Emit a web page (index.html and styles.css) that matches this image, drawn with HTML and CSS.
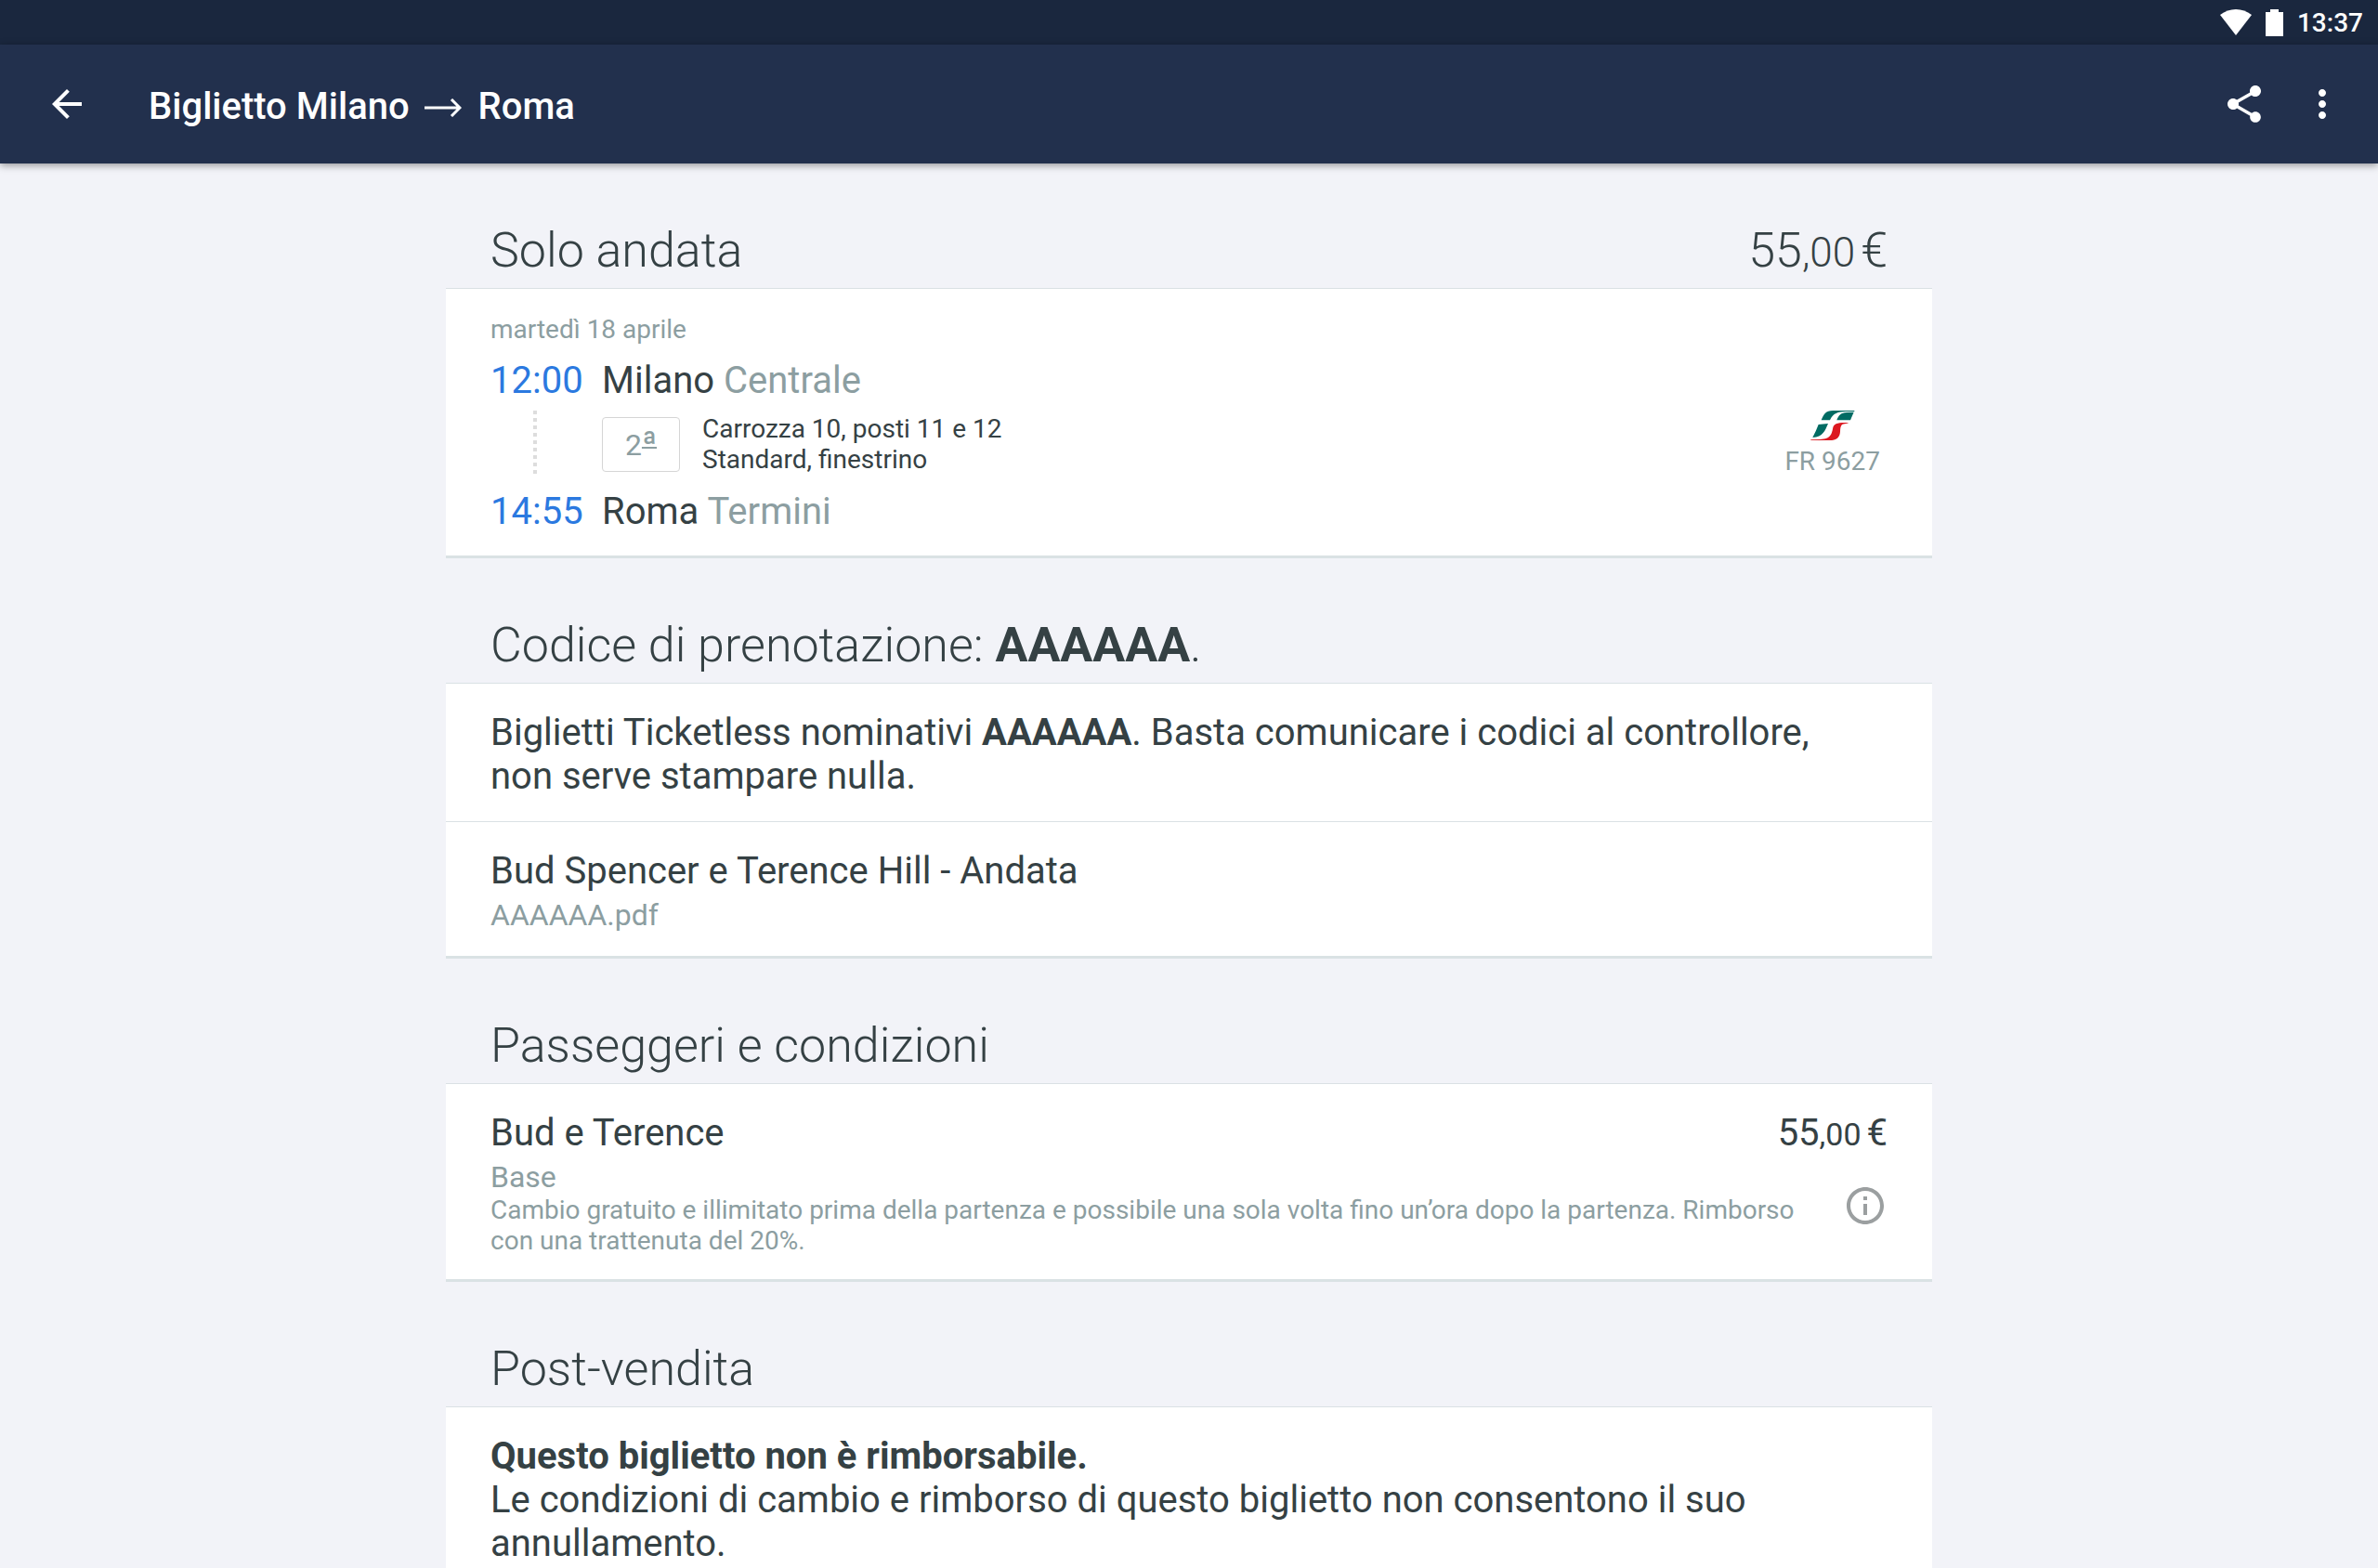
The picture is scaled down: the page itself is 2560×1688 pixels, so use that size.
FILE: index.html
```
<!DOCTYPE html>
<html lang="it">
<head>
  <meta charset="utf-8">
  <title>Biglietto Milano → Roma</title>
  <link rel="stylesheet" href="styles.css">
</head>
<body>
  <div class="status-bar">
    <svg class="wifi" viewBox="0 0 34 28"><path d="M0 6C10-2 24-2 34 6L17 28Z"/></svg>
    <svg class="battery" viewBox="0 0 19 29"><path d="M5 0H14V3H19V29H0V3H5Z"/></svg>
    <span>13:37</span>
  </div>

  <header class="app-bar">
    <button class="icon-button" aria-label="Indietro">
      <svg viewBox="0 0 24 24"><path d="M20 11H7.83l5.59-5.59L12 4l-8 8 8 8 1.41-1.41L7.83 13H20v-2z"/></svg>
    </button>
    <h1>Biglietto Milano <svg class="arrow" role="img" aria-label="→" viewBox="0 0 40 20"><path d="M0 10H38M29 1L38 10L29 19"/></svg> Roma</h1>
    <button class="icon-button" aria-label="Condividi">
      <svg viewBox="0 0 24 24"><path d="M18 16.08c-.76 0-1.44.3-1.96.77L8.91 12.7c.05-.23.09-.46.09-.7s-.04-.47-.09-.7l7.05-4.11c.54.5 1.25.81 2.04.81 1.66 0 3-1.34 3-3s-1.34-3-3-3-3 1.34-3 3c0 .24.04.47.09.7L8.04 9.81C7.5 9.31 6.79 9 6 9c-1.66 0-3 1.34-3 3s1.34 3 3 3c.79 0 1.5-.31 2.04-.81l7.12 4.16c-.05.21-.08.43-.08.65 0 1.61 1.31 2.92 2.92 2.92s2.92-1.31 2.92-2.92-1.31-2.92-2.92-2.92z"/></svg>
    </button>
    <button class="icon-button" aria-label="Altro">
      <svg viewBox="0 0 24 24"><path d="M12 8c1.100 0 2-.9 2-2s-.9-2-2-2-2 .9-2 2 .9 2 2 2zm0 2c-1.100 0-2 .9-2 2s.9 2 2 2 2-.9 2-2-.9-2-2-2zm0 6c-1.100 0-2 .9-2 2s.9 2 2 2 2-.9 2-2-.9-2-2-2z"/></svg>
    </button>
  </header>

  <main>
    <section>
      <div class="section-title">
        <h2>Solo andata</h2>
        <span class="price">55<small>,00</small>€</span>
      </div>
      <div class="card">
        <div class="card-row journey">
          <p class="date">martedì 18 aprile</p>
          <div class="trip">
            <time>12:00</time>
            <p class="station">Milano <span>Centrale</span></p>
            <div class="dots"></div>
            <div class="seats">
              <span class="badge">2<span>ª</span></span>
              <p>Carrozza 10, posti 11 e 12<br>Standard, finestrino</p>
            </div>
            <div class="train">
              <svg viewBox="0 0 142 96">
                <path fill="#006b63" d="M34 31C42 12 48 0 72 0H142L140 3H112C88 4 72 8 62 31Z"/>
                <path fill="#006b63" d="M84 31C90 14 98 7 116 6L139 5L128 31Z"/>
                <path fill="#006b63" d="M25 45Q40 44 56 42C46 64 40 86 6 87Q18 64 25 45Z"/>
                <path fill="#dc1820" d="M123 39C100 39 76 38 72 54C68 74 66 92 30 93L0 94V96H60C84 96 94 86 95 68C96 50 98 44 110 43Q118 42 123 39Z"/>
              </svg>
              <span>FR 9627</span>
            </div>
            <time>14:55</time>
            <p class="station">Roma <span>Termini</span></p>
          </div>
        </div>
      </div>
    </section>

    <section>
      <div class="section-title">
        <h2>Codice di prenotazione: <b>AAAAAA</b>.</h2>
      </div>
      <div class="card">
        <div class="card-row">
          <p class="message">Biglietti Ticketless nominativi <b>AAAAAA</b>. Basta comunicare i codici al controllore, non serve stampare nulla.</p>
        </div>
        <div class="card-row">
          <p>Bud Spencer e Terence Hill - Andata</p>
          <p class="subtitle">AAAAAA.pdf</p>
        </div>
      </div>
    </section>

    <section>
      <div class="section-title">
        <h2>Passeggeri e condizioni</h2>
      </div>
      <div class="card">
        <div class="card-row">
          <div class="passenger">
            <p>Bud e Terence</p>
            <span class="price">55<small>,00</small>€</span>
          </div>
          <div class="fare">
            <div>
              <p class="subtitle">Base</p>
              <p class="note">Cambio gratuito e illimitato prima della partenza e possibile una sola volta fino un’ora dopo la partenza. Rimborso con una trattenuta del 20%.</p>
            </div>
            <button class="icon-button info" aria-label="Informazioni">
              <svg viewBox="0 0 24 24"><path d="M11 17h2v-6h-2v6zm1-15C6.480 2 2 6.480 2 12s4.480 10 10 10 10-4.480 10-10S17.520 2 12 2zm0 18c-4.410 0-8-3.590-8-8s3.590-8 8-8 8 3.590 8 8-3.590 8-8 8zM11 9h2V7h-2v2z"/></svg>
            </button>
          </div>
        </div>
      </div>
    </section>

    <section>
      <div class="section-title">
        <h2>Post-vendita</h2>
      </div>
      <div class="card">
        <div class="card-row">
          <p><b>Questo biglietto non è rimborsabile.</b></p>
          <p class="message">Le condizioni di cambio e rimborso di questo biglietto non consentono il suo annullamento.</p>
        </div>
      </div>
    </section>
  </main>
</body>
</html>
```
FILE: styles.css
```
* {
  box-sizing: border-box;
}

body {
  display: flex;
  flex-direction: column;
  height: 100vh;
  margin: 0;
  background-color: #f2f3f8;
  color: #354144;
  font-family: Roboto, "Liberation Sans", sans-serif;
  font-size: 40px;
  line-height: 47px;
}

h1, h2, p {
  margin: 0;
}

svg {
  display: block;
}

.status-bar {
  display: flex;
  flex: none;
  align-items: center;
  justify-content: flex-end;
  height: 48px;
  padding-right: 16px;
  background-color: #1a273e;
  color: white;
  fill: white;
  font-size: 28px;
  font-weight: 500;
}

.wifi {
  width: 34px;
  height: 28px;
  margin-right: 15px;
}

.battery {
  width: 19px;
  height: 29px;
  margin-right: 15px;
}

.app-bar {
  display: flex;
  flex: none;
  align-items: center;
  gap: 36px;
  height: 128px;
  padding: 0 36px 0 48px;
  background-color: #22304d;
  color: white;
  box-shadow: 0 2px 8px rgba(0, 0, 0, 0.4);
  z-index: 1;
}

.app-bar h1 {
  flex: 1;
  padding: 4px 0 0 28px;
  font-size: 40px;
  font-weight: 500;
}

.arrow {
  display: inline-block;
  width: 40px;
  height: 20px;
  margin: 0 8px 0 6px;
  vertical-align: 2px;
  fill: none;
  stroke: white;
  stroke-width: 3;
}

.icon-button {
  flex: none;
  width: 48px;
  height: 48px;
  padding: 0;
  border: 0;
  background: none;
  color: white;
}

.icon-button svg {
  width: 100%;
  height: 100%;
  fill: currentColor;
}

main {
  flex: 1;
  min-height: 0;
  width: 100%;
  max-width: 1600px;
  margin: 0 auto;
  overflow: hidden;
}

.section-title {
  display: flex;
  justify-content: space-between;
  padding: 64px 48px 10px;
  font-size: 52px;
  font-weight: 300;
  line-height: 60px;
}

h2 {
  font-size: 52px;
  font-weight: 300;
}

b {
  font-weight: 700;
}

.price small {
  margin-right: 6px;
  line-height: 1;
}

.section-title small {
  font-size: 44px;
}

.passenger small {
  font-size: 34px;
}

.card {
  background-color: white;
  border-top: 1px solid #dae1e4;
  border-bottom: 3px solid #dae2e4;
}

.card-row {
  padding: 29px 48px 25px;
}

.card-row + .card-row {
  border-top: 1px solid #dae1e4;
}

.journey {
  padding: 27px 48px 24px;
}

.message {
  padding-right: 48px;
}

.date {
  color: #8c9ea1;
  font-size: 28px;
  line-height: 33px;
}

.trip {
  display: grid;
  grid-template-columns: 120px 1fr auto;
  padding-top: 15px;
}

.trip time {
  grid-column: 1;
  color: #2b79e0;
}

.station {
  grid-column: 2 / 4;
}

.station span {
  color: #8c9ea1;
}

/* dashed line between departure and arrival */
.dots {
  width: 4px;
  height: 68px;
  margin: 9px 0 17px 46px;
  background: repeating-linear-gradient(#dddddd 0 4px, transparent 4px 8px);
}

.seats {
  display: flex;
  align-items: center;
  gap: 24px;
  height: 66px;
  margin-top: 12px;
  font-size: 28px;
  line-height: 33px;
}

.badge {
  width: 84px;
  height: 59px;
  border: 1px solid #d5d5d5;
  border-radius: 4px;
  color: #8c9ea1;
  font-size: 32px;
  line-height: 58px;
  text-align: center;
}

.badge span {
  font-size: 36px;
  line-height: 1;
  text-decoration: underline 2px;
  text-decoration-skip-ink: none;
  text-underline-offset: -9px;
}

.train {
  display: flex;
  flex-direction: column;
  align-items: center;
  gap: 6px;
  margin: 9px 8px 0 0;
  color: #8c9ea1;
  font-size: 28px;
  line-height: 33px;
}

.train svg {
  width: 48px;
  height: 32px;
}

.subtitle {
  margin-top: 5px;
  color: #8c9ea1;
  font-size: 32px;
  line-height: 38px;
}

.note {
  color: #8c9ea1;
  font-size: 28px;
  line-height: 33px;
}

.passenger {
  display: flex;
  justify-content: space-between;
}

.fare {
  display: flex;
  align-items: center;
  gap: 48px;
}

.fare > div {
  flex: 1;
}

.info {
  color: #9b9fa0;
}
```
